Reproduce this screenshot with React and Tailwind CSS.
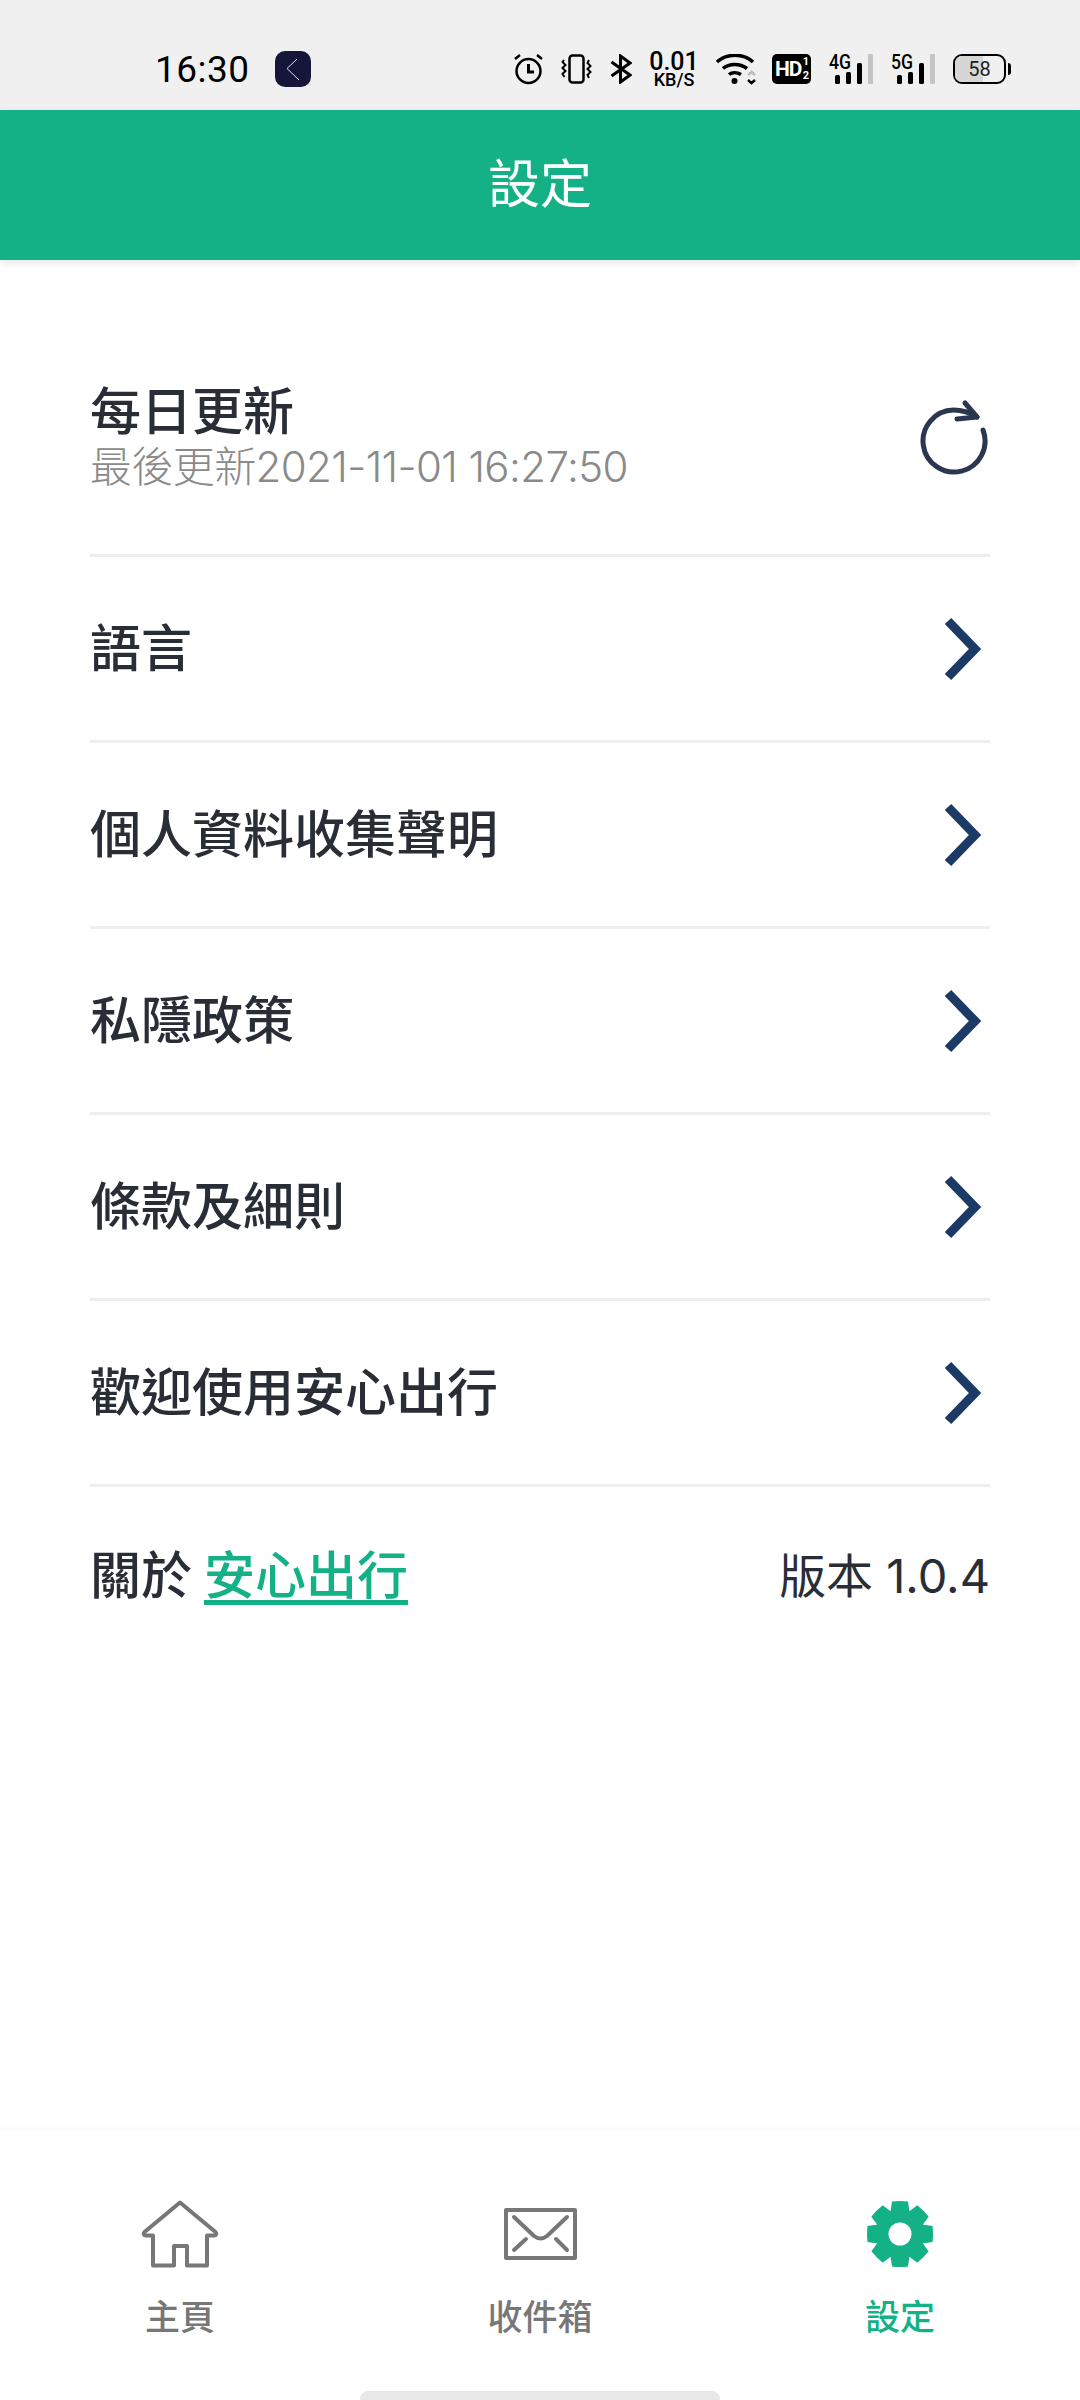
import React from 'react';

const rows = ['語言', '個人資料收集聲明', '私隱政策', '條款及細則', '歡迎使用安心出行'];

const Chevron = () => (
  <svg width="40" height="64" viewBox="0 0 40 64" fill="none" stroke="#1c3a66" strokeWidth="9">
    <path d="M6 4 L33 32 L6 60" />
  </svg>
);

const Refresh = () => (
  <svg width="72" height="78" viewBox="0 0 72 78" fill="none" stroke="#2b3650" strokeWidth="5" strokeLinecap="round" strokeLinejoin="round">
    <path d="M65 32 A31 31 0 1 1 35.500 12 Q48 12 59 19" />
    <path d="M47 5 L59 19 L39 21" />
  </svg>
);

const Alarm = () => (
  <svg width="29" height="32" viewBox="0 0 29 32" fill="none" stroke="#000" strokeWidth="2.500">
    <circle cx="14.500" cy="18" r="12" />
    <path d="M14.500 11 V19 H20" strokeWidth="3" />
    <path d="M1 6 L6 2 M28 6 L23 2" strokeWidth="2.500" />
  </svg>
);

const Vibrate = () => (
  <svg width="31" height="30" viewBox="0 0 31 30" fill="none" stroke="#000" strokeWidth="2">
    <rect x="8.500" y="1.500" width="14" height="27" rx="3" strokeWidth="2.500" />
    <path d="M3 6 L1.500 8 L4.500 11 L1.500 14 L4.500 17 L1.500 20 L3.500 23" />
    <path d="M28 6 L26.500 9 L29.500 12 L26.500 15 L29.500 18 L26.500 21 L28 24" />
  </svg>
);

const Bluetooth = () => (
  <svg width="22" height="30" viewBox="0 0 22 30" fill="none" stroke="#000" strokeWidth="3">
    <path d="M1.500 8 L20 21 L10.500 28 V2 L20 9 L1.500 22" />
  </svg>
);

const Wifi = () => (
  <svg width="41" height="31" viewBox="0 0 41 31" fill="none" stroke="#000" strokeWidth="3.500">
    <path d="M1 8 C11 -1 27 -1 37 8" />
    <path d="M7 14.500 C13 9 24 9 31 14.500" />
    <path d="M13 20.500 C16 18 21 18 25 20.500" />
    <circle cx="18.500" cy="27" r="3" fill="#000" stroke="none" />
    <path d="M32 21 L35.500 18 L39 21" stroke="#bbb" strokeWidth="2.500" />
    <path d="M32 26 L35.500 29 L39 26" strokeWidth="2.500" />
  </svg>
);

const HdBadge = () => (
  <div className="relative flex h-[30px] w-[39px] items-center rounded-[5px] bg-black pl-[3px] font-['Roboto',sans-serif] text-[21px] leading-none font-bold tracking-[-1px] text-white">
    HD
    <span className="absolute top-[2px] right-[3px] text-[11px] leading-[12px]">1</span>
    <span className="absolute right-[3px] bottom-[2px] text-[11px] leading-[12px]">2</span>
  </div>
);

const Network = ({ label }) => (
  <svg width="44" height="30" viewBox="0 0 44 30" className="overflow-visible">
    <text x="0" y="15" fontFamily="Roboto, sans-serif" fontSize="20" fontWeight="500" textLength="22" lengthAdjust="spacingAndGlyphs">{label}</text>
    <rect x="6" y="21" width="5" height="9" rx="1.500" />
    <rect x="17" y="18" width="5" height="12" rx="1.500" />
    <rect x="28" y="9" width="5" height="21" rx="1.500" />
    <rect x="39" y="0" width="5" height="30" rx="1" fill="#c4c4c4" />
  </svg>
);

const Battery = () => (
  <div className="flex items-center gap-[2px]">
    <div className="relative flex h-[30px] w-[53px] items-center justify-center overflow-hidden rounded-[9px] border-[2.5px] border-black">
      <div className="absolute inset-y-0 left-0 w-[58%] bg-[#d6d6d6]" />
      <span className="relative font-['Roboto',sans-serif] text-[20px] leading-none text-[#222]">58</span>
    </div>
    <div className="h-[12px] w-[3px] rounded-r-sm bg-black" />
  </div>
);

const HomeIcon = () => (
  <svg width="78" height="68" viewBox="0 0 78 68" fill="none" stroke="#777" strokeWidth="4" strokeLinejoin="round">
    <path d="M39 2.500 L3.500 32 Q1.500 35 5 35.500 H12 V65.500 H33 V46 H46 V65.500 H66 V35.500 H73 Q76.500 35 74.500 32 Z" />
  </svg>
);

const MailIcon = () => (
  <svg width="73" height="52" viewBox="0 0 73 52" fill="none" stroke="#777" strokeWidth="4" strokeLinecap="round" strokeLinejoin="round">
    <rect x="2" y="2" width="69" height="48" />
    <path d="M10 9 L30 28 Q36.500 33 43 28 L63 9" />
    <path d="M10 42 L22 31 M63 42 L52 31" />
  </svg>
);

const GearIcon = () => (
  <svg width="66" height="66" viewBox="0 0 66 66">
    {[0, 45, 90, 135, 180, 225, 270, 315].map((deg) => (
      <path key={deg} d="M25 0.500 Q33 -0.500 41 0.500 L43 14 H23 Z" fill="#14b187" transform={`rotate(${deg} 33 33)`} />
    ))}
    <circle cx="33" cy="33" r="23" fill="#14b187" />
    <circle cx="33" cy="33" r="11.500" fill="#fff" />
  </svg>
);

const NavItem = ({ icon, label, active }) => (
  <div className="flex flex-col items-center">
    <div className="flex h-[70px] items-center">{icon}</div>
    <span className={`mt-[28px] text-[35px] leading-[40px] font-medium ${active ? 'text-[#14b187]' : 'text-[#777777]'}`}>{label}</span>
  </div>
);

const App = () => {
  return (
    <div className="flex h-[2400px] w-[1080px] flex-col overflow-hidden bg-white font-['Inter','Noto_Sans_CJK_TC',sans-serif] text-[#292d36]">
      {/* Status bar */}
      <div className="flex h-[110px] items-center justify-between bg-[#f0f0f0] pt-[28px] pr-[69px] pl-[155px]">
        <div className="flex items-center gap-[25px]">
          <span className="font-['Roboto',sans-serif] text-[37px] leading-none tracking-[0.5px] text-black">16:30</span>
          <div className="flex h-[36px] w-[36px] items-center justify-center rounded-[10px] bg-[#16163a]">
            <svg width="14" height="28" viewBox="0 0 14 28" fill="none" stroke="#dcdcf0" strokeWidth="1">
              <path d="M11 4 L1 13.500 L13 25" />
            </svg>
          </div>
        </div>
        <div className="flex items-center gap-[18px]">
          <Alarm />
          <Vibrate />
          <Bluetooth />
          <div className="flex w-[48px] flex-col items-center font-['Roboto',sans-serif] text-black">
            <span className="text-[25px] leading-[21px] font-medium">0.01</span>
            <span className="text-[18px] leading-[15px] font-medium">KB/S</span>
          </div>
          <Wifi />
          <div className="-ml-[3px]">
            <HdBadge />
          </div>
          <Network label="4G" />
          <Network label="5G" />
          <Battery />
        </div>
      </div>

      {/* Header */}
      <div className="z-10 flex h-[150px] items-center justify-center bg-[#14b187] text-[52px] leading-none text-white shadow-[0_3px_8px_rgba(0,0,0,0.10)]">
        設定
      </div>

      {/* Settings list */}
      <div className="flex-1 px-[90px]">
        <div className="flex h-[297px] items-end border-b-[3px] border-[#eeeeee] pb-[62px]">
          <div className="flex w-full items-center justify-between">
            <div className="flex flex-col">
              <span className="text-[51px] leading-[60px] font-medium">每日更新</span>
              <span className="text-[42px] leading-[50px] font-light tracking-[-0.6px] text-[#8a8a8a]">最後更新2021-11-01 16:27:50</span>
            </div>
            <Refresh />
          </div>
        </div>
        {rows.map((row) => (
          <div key={row} className="flex h-[186px] items-center justify-between border-b-[3px] border-[#eeeeee] pr-[8px]">
            <span className="text-[51px] leading-none font-medium">{row}</span>
            <Chevron />
          </div>
        ))}
        <div className="flex h-[176px] items-center justify-between leading-none">
          <span className="text-[51px] font-medium">
            關於<span className="ml-[12px] text-[#14b187] underline underline-offset-[6px]">安心出行</span>
          </span>
          <span className="text-[47px]">版本 1.0.4</span>
        </div>
      </div>

      {/* Bottom nav */}
      <div className="grid h-[261px] grid-cols-3 bg-white pt-[69px] shadow-[0_-2px_6px_rgba(0,0,0,0.03)]">
        <NavItem icon={<HomeIcon />} label="主頁" />
        <NavItem icon={<MailIcon />} label="收件箱" />
        <NavItem icon={<GearIcon />} label="設定" active />
      </div>
      <div className="flex h-[9px] justify-center">
        <div className="h-[9px] w-[360px] rounded-t-lg bg-[#e8e8e8]" />
      </div>
    </div>
  );
};

export default App;
